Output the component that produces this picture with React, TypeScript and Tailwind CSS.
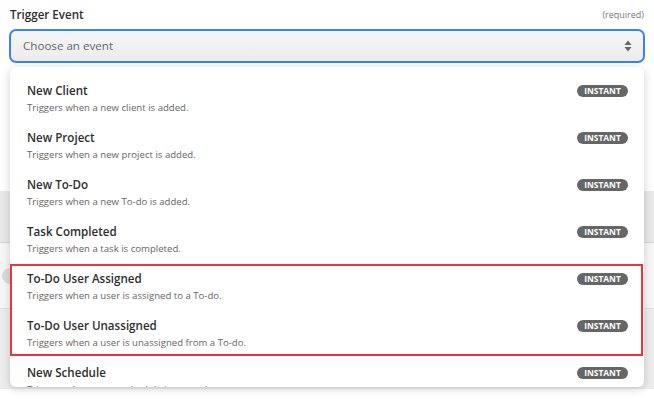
const events = [
  { title: "New Client", desc: "Triggers when a new client is added." },
  { title: "New Project", desc: "Triggers when a new project is added." },
  { title: "New To-Do", desc: "Triggers when a new To-do is added." },
  { title: "Task Completed", desc: "Triggers when a task is completed." },
  { title: "To-Do User Assigned", desc: "Triggers when a user is assigned to a To-do." },
  { title: "To-Do User Unassigned", desc: "Triggers when a user is unassigned from a To-do." },
  { title: "New Schedule", desc: "Triggers when a new schedule is created." },
];

const EventRow = ({ title, desc }: { title: string; desc: string }) => (
  <div className="h-[47px] flex items-start justify-between pl-[17px] pr-[16px] pt-[8px]">
    <div className="flex flex-col">
      <span className="text-[11.6px] leading-[15px] font-semibold text-[#2d2e2e]">{title}</span>
      <span className="text-[9.6px] leading-[13px] mt-[3px] text-[#666666]">{desc}</span>
    </div>
    <span className="mt-[2px] h-[12px] w-[51px] rounded-full bg-[#666666] text-white text-[8.4px] font-bold leading-[12px] text-center">
      INSTANT
    </span>
  </div>
);

const App = () => {
  return (
    <div
      className="relative w-[654px] h-[399px] overflow-hidden bg-white"
      style={{ fontFamily: '"Open Sans", "Noto Sans", sans-serif' }}>
      {/* page behind the menu */}
      <div className="px-[9px] pt-[5px]">
        <div className="flex justify-between items-center h-[20px] px-[1px]">
          <span className="text-[11.6px] font-semibold text-[#2d2e2e]">Trigger Event</span>
          <span className="text-[9px] text-[#777777]">(required)</span>
        </div>
        <div className="mt-[4px] h-[34px] rounded-[7px] border-2 border-[#3b82f6] bg-gradient-to-b from-[#f6f6f6] to-[#ececec] flex items-center justify-between pl-[12px] pr-[11px]">
          <span className="text-[11.6px] text-[#666666]">Choose an event</span>
          <svg width="8" height="14" viewBox="0 0 8 14">
            <path d="M4 1.5 L7.5 6 L0.5 6 Z" fill="#666" />
            <path d="M4 12.5 L7.5 8 L0.5 8 Z" fill="#666" />
          </svg>
        </div>
      </div>
      <div className="mt-[128px] h-[52px] bg-[#e9e9e9] border-b border-[#d6d6d6]" />
      <div className="h-[66px] bg-[#f7f7f7] border-b border-[#dddddd] flex items-center pl-[2px]">
        <div className="w-[16px] h-[16px] rounded-full bg-[#dcdcdc]" />
      </div>
      <div className="h-[80px] bg-[#ededed]" />

      {/* dropdown menu */}
      <div className="absolute left-[10px] top-[67px] w-[634px] h-[320px] rounded-[6px] bg-white shadow-[0_2px_10px_rgba(0,0,0,0.18)] overflow-hidden pt-[8px]">
        {events.map((e) => (
          <EventRow key={e.title} title={e.title} desc={e.desc} />
        ))}
        {/* highlight box */}
        <div className="absolute left-0 top-[197px] w-[633px] h-[92px] border-2 border-[#f0323c]" />
      </div>
    </div>
  );
};

export default App;
